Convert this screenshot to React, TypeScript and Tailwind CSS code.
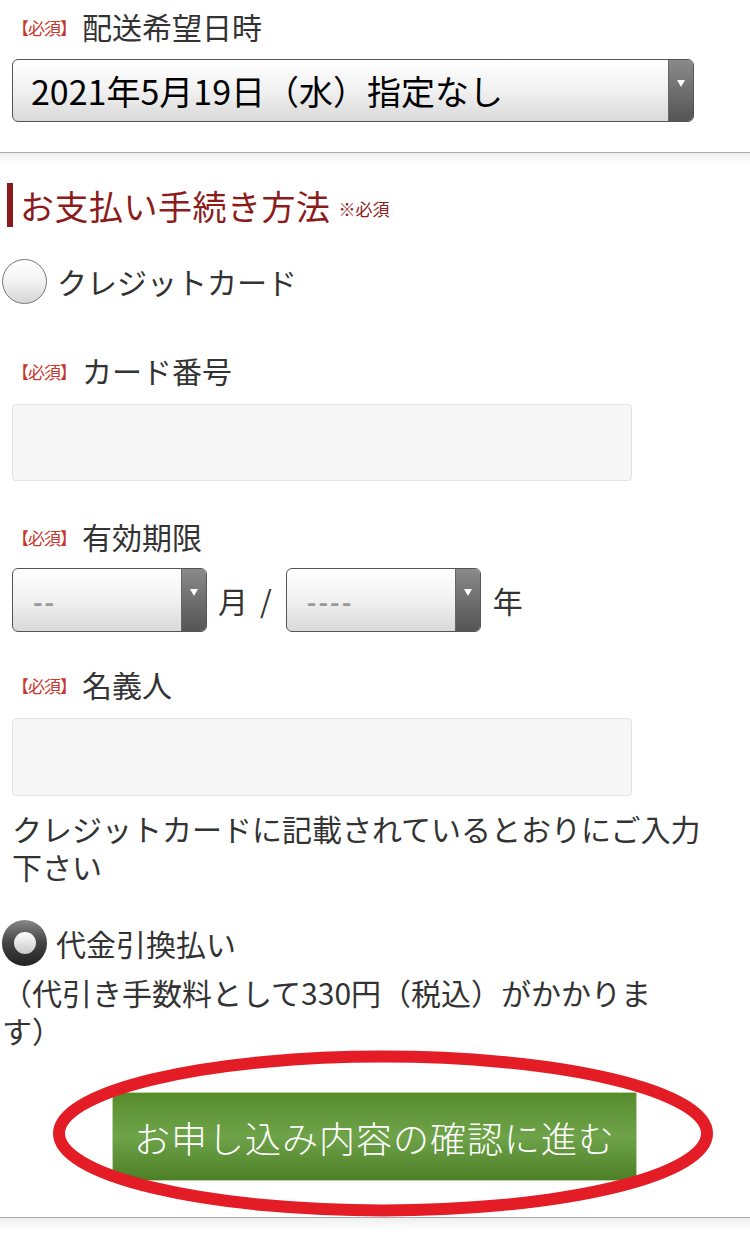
import React from 'react';

const font = { fontFamily: '"Noto Sans CJK JP", "Noto Sans", sans-serif' };

function Label({ text, className = '' }: { text: string; className?: string }) {
  return (
    <div className={`flex items-center h-[34px] pl-[12px] ${className}`}>
      <span className="text-[17px] text-[#c8372d] tracking-[-1px] mr-[6px] mt-[3px]">【必須】</span>
      <span className="text-[30px] text-[#333]">{text}</span>
    </div>
  );
}

function Select({ value, muted, className = '' }: { value: string; muted?: boolean; className?: string }) {
  return (
    <div className={`flex items-stretch h-full rounded-[6px] border border-[#555] overflow-hidden bg-gradient-to-b from-white via-[#f1f1f1] to-[#d9d9d9] ${className}`}>
      <div className={`flex-1 flex items-center ${muted ? 'pl-[20px] text-[26px] text-[#999] font-bold tracking-[2px]' : 'pl-[18px] text-[34px] text-black'}`}>
        {value}
      </div>
      <div className="w-[25px] flex justify-center pt-[20px] bg-gradient-to-b from-[#8a8a8a] to-[#555] border-l border-[#666]">
        <svg width="8" height="7" viewBox="0 0 8 7">
          <path d="M0 0 H8 L4 7 Z" fill="#fff" />
        </svg>
      </div>
    </div>
  );
}

function Radio({ checked }: { checked?: boolean }) {
  if (checked) {
    return (
      <div className="w-[45px] h-[46px] rounded-full bg-gradient-to-b from-[#888] via-[#444] to-[#222] flex items-center justify-center">
        <div className="w-[22px] h-[22px] rounded-full bg-gradient-to-b from-white to-[#c9c9c9]" />
      </div>
    );
  }
  return <div className="w-[45px] h-[45px] rounded-full border border-[#777] bg-gradient-to-b from-white via-[#f2f2f2] to-[#d6d6d6]" />;
}

function Divider({ className = '' }: { className?: string }) {
  return (
    <div className={className}>
      <div className="h-[1px] bg-[#a9a9a9]" />
      <div className="h-[12px] bg-gradient-to-b from-[#efefef] to-white" />
    </div>
  );
}

export default function App() {
  return (
    <div className="w-[750px] h-[1234px] bg-white overflow-hidden" style={font}>
      <div className="pt-[9px]">
        <Label text="配送希望日時" />
        <div className="mt-[16px] ml-[12px] w-[682px] h-[63px]">
          <Select value="2021年5月19日（水）指定なし" />
        </div>
      </div>

      <Divider className="mt-[30px]" />

      <div className="mt-[18px] flex items-center h-[44px]">
        <div className="ml-[7px] w-[6px] h-[44px] bg-[#8c1c1c]" />
        <span className="ml-[7px] text-[34px] text-[#8c1c1c] tracking-[0.5px]">お支払い手続き方法</span>
        <span className="ml-[8px] mt-[8px] text-[17px] text-[#8c1c1c]">※必須</span>
      </div>

      <div className="mt-[32px] flex items-center pl-[2px]">
        <Radio />
        <span className="ml-[10px] text-[30px] text-[#333]">クレジットカード</span>
      </div>

      <Label text="カード番号" className="mt-[49px]" />
      <div className="mt-[17px] ml-[12px] w-[620px] h-[77px] rounded-[4px] border border-[#e3e3e3] bg-[#f7f7f7]" />

      <Label text="有効期限" className="mt-[38px]" />
      <div className="mt-[15px] ml-[12px] flex items-center h-[64px]">
        <div className="w-[195px] h-[64px]">
          <Select value="--" muted />
        </div>
        <span className="ml-[11px] text-[30px] text-[#333]">月</span>
        <span className="ml-[12px] text-[30px] text-[#333]">/</span>
        <div className="ml-[14px] w-[195px] h-[64px]">
          <Select value="----" muted />
        </div>
        <span className="ml-[12px] text-[30px] text-[#333]">年</span>
      </div>

      <Label text="名義人" className="mt-[35px]" />
      <div className="mt-[17px] ml-[12px] w-[620px] h-[78px] rounded-[4px] border border-[#e3e3e3] bg-[#f7f7f7]" />

      <div className="mt-[13px] pl-[12px] text-[30px] leading-[38px] text-[#333]">
        <div>クレジットカードに記載されているとおりにご入力</div>
        <div>下さい</div>
      </div>

      <div className="mt-[35px] flex items-center pl-[2px]">
        <Radio checked />
        <span className="ml-[9px] text-[30px] text-[#333]">代金引換払い</span>
      </div>
      <div className="mt-[7px] pl-[2px] text-[30px] leading-[38px] text-[#333]">
        <div>（代引き手数料として330円（税込）がかかりま</div>
        <div>す）</div>
      </div>

      <div className="mt-[43px] flex justify-start pl-[112px]">
        <div className="relative">
          <button className="w-[525px] h-[89px] border border-[#b9d3a1] bg-gradient-to-b from-[#578c2d] via-[#6ea349] to-[#4d7f26] text-white text-[36px] font-light tracking-[1px]">
            お申し込み内容の確認に進む
          </button>
          <svg className="absolute left-[-60px] top-[-42px] pointer-events-none" width="662" height="167" viewBox="0 0 662 167">
            <ellipse cx="331" cy="83.5" rx="324" ry="77" fill="none" stroke="#e31c25" strokeWidth="12" />
          </svg>
        </div>
      </div>

      <Divider className="mt-[36px]" />
    </div>
  );
}
